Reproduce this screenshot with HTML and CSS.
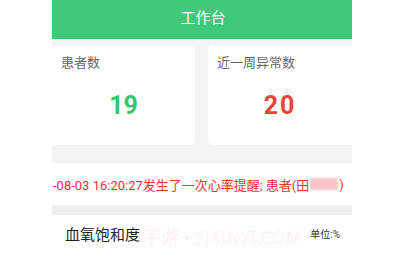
FILE: index.html
```html
<!DOCTYPE html>
<html lang="zh">
<head>
<meta charset="utf-8">
<link rel="stylesheet" href="styles.css">
</head>
<body>
<div class="page">
  <div class="header">工作台</div>
  <div class="stats">
    <div class="card card-left">
      <div class="label">患者数</div>
      <div class="num green">19</div>
    </div>
    <div class="card card-right">
      <div class="label">近一周异常数</div>
      <div class="num red">20</div>
    </div>
  </div>
  <div class="notice">
    <span class="msg">-08-03 16:20:27发生了一次心率提醒; 患者(田<span class="blur"></span>)</span>
  </div>
  <div class="band"></div>
  <div class="section">
    <div class="sec-title">血氧饱和度</div>
    <div class="unit">单位:%</div>
  </div>
</div>
<div class="watermark">手游 • SJXINYI.COM</div>
</body>
</html>
```

FILE: styles.css
```css
html, body {
  margin: 0;
  padding: 0;
  background: #ffffff;
  font-family: Roboto, "Noto Sans CJK SC", sans-serif;
}
.page {
  margin-left: 52px;
  width: 300px;
  overflow: hidden;
}
.header {
  height: 39px;
  background: #41c97b;
  color: #ffffff;
  font-size: 15px;
  line-height: 37px;
  text-align: center;
  padding-left: 2px;
}
.stats {
  background: #f3f4f4;
  display: flex;
  gap: 13px;
  padding: 7px 0 18px;
}
.card {
  background: #ffffff;
  height: 99px;
  box-sizing: border-box;
  padding-top: 8px;
}
.card-left {
  width: 143px;
  border-radius: 0 5px 5px 0;
  padding-left: 9px;
}
.card-right {
  width: 144px;
  border-radius: 5px 0 0 5px;
  padding-left: 9px;
}
.label {
  font-size: 13px;
  line-height: 18px;
  color: #666666;
}
.num {
  text-align: center;
  font-size: 25px;
  font-weight: bold;
  line-height: 28px;
  margin-top: 20px;
  padding-right: 9px;
}
.green { color: #3cc170; }
.red { color: #ec4438; letter-spacing: 2px; }
.notice {
  height: 42px;
  display: flex;
  align-items: center;
  background: #ffffff;
  white-space: nowrap;
  padding-left: 1px;
}
.msg {
  color: #e53434;
  font-size: 13px;
  display: inline-flex;
  align-items: center;
}
.blur {
  display: inline-block;
  width: 28px;
  height: 12px;
  background: #f4c3c6;
  margin: 0 1px;
  filter: blur(1.5px);
}
.band {
  height: 10px;
  background: #efefef;
}
.section {
  display: flex;
  align-items: center;
  justify-content: space-between;
  height: 36px;
  padding: 0 12px 0 13px;
}
.sec-title {
  font-size: 15px;
  color: #222222;
}
.unit {
  font-size: 10px;
  color: #333333;
}
.watermark {
  position: absolute;
  left: 143px;
  top: 223px;
  font-size: 18px;
  color: rgba(255, 120, 190, 0.14);
  font-family: "Noto Sans", "Noto Sans CJK SC", sans-serif;
  pointer-events: none;
}
```
